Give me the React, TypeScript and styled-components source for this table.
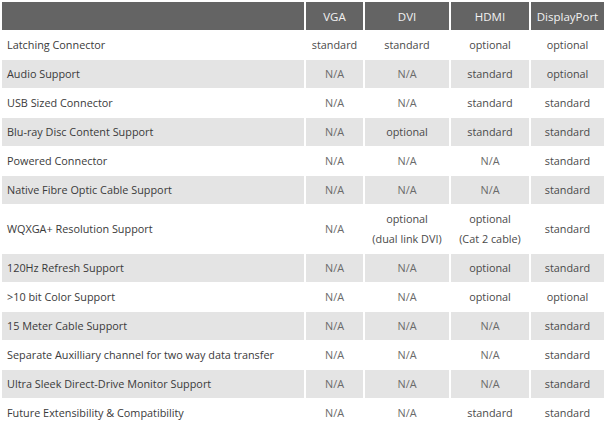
import React from "react";
import styled, { createGlobalStyle } from "styled-components";

const Global = createGlobalStyle`
  html, body { margin: 0; padding: 0; background: #ffffff; }
  body { font-family: "Open Sans", "DejaVu Sans", sans-serif; }
`;

const Table = styled.table`
  border-collapse: separate;
  border-spacing: 2px 1px;
  table-layout: fixed;
  width: 606px;
  margin-top: 1px;
  font-family: "Open Sans", "DejaVu Sans", sans-serif;
  font-size: 10.85px;
`;

const HeadCell = styled.th`
  background: #646464;
  color: #f2f2f2;
  font-weight: normal;
  height: 28px;
  padding: 0;
  text-align: center;
  font-size: 11.5px;
`;

const Row = styled.tr<{ $alt: boolean }>`
  background: ${(p) => (p.$alt ? "#e4e4e4" : "#ffffff")};
`;

const Label = styled.td<{ $tall?: boolean }>`
  height: ${(p) => (p.$tall ? "47px" : "27px")};
  padding: 0 0 1px 5px;
  color: #3a3a3a;
  white-space: nowrap;
`;

const Value = styled.td<{ $na: boolean }>`
  padding: 0 0 1px 0;
  text-align: center;
  color: ${(p) => (p.$na ? "#6a6a6a" : "#4a4a4a")};
  line-height: 20px;
`;

const cols = [
  { name: "", w: 302 },
  { name: "VGA", w: 57 },
  { name: "DVI", w: 84 },
  { name: "HDMI", w: 78 },
  { name: "DisplayPort", w: 73 },
];

const rows: [string, string[]][] = [
  ["Latching Connector", ["standard", "standard", "optional", "optional"]],
  ["Audio Support", ["N/A", "N/A", "standard", "optional"]],
  ["USB Sized Connector", ["N/A", "N/A", "standard", "standard"]],
  ["Blu-ray Disc Content Support", ["N/A", "optional", "standard", "standard"]],
  ["Powered Connector", ["N/A", "N/A", "N/A", "standard"]],
  ["Native Fibre Optic Cable Support", ["N/A", "N/A", "N/A", "standard"]],
  ["WQXGA+ Resolution Support", ["N/A", "optional\n(dual link DVI)", "optional\n(Cat 2 cable)", "standard"]],
  ["120Hz Refresh Support", ["N/A", "N/A", "optional", "standard"]],
  [">10 bit Color Support", ["N/A", "N/A", "optional", "optional"]],
  ["15 Meter Cable Support", ["N/A", "N/A", "N/A", "standard"]],
  ["Separate Auxilliary channel for two way data transfer", ["N/A", "N/A", "N/A", "standard"]],
  ["Ultra Sleek Direct-Drive Monitor Support", ["N/A", "N/A", "N/A", "standard"]],
  ["Future Extensibility & Compatibility", ["N/A", "N/A", "standard", "standard"]],
];

export default function App() {
  return (
    <>
      <Global />
      <Table>
        <colgroup>
          {cols.map((c, i) => (
            <col key={i} style={{ width: c.w }} />
          ))}
        </colgroup>
        <thead>
          <tr>
            {cols.map((c, i) => (
              <HeadCell key={i}>{c.name}</HeadCell>
            ))}
          </tr>
        </thead>
        <tbody>
          {rows.map(([label, vals], i) => (
            <Row key={i} $alt={i % 2 === 1}>
              <Label $tall={vals.some((v) => v.includes("\n"))}>{label}</Label>
              {vals.map((v, j) => (
                <Value key={j} $na={v === "N/A"}>
                  {v.split("\n").map((line, k) => (
                    <div key={k}>{line}</div>
                  ))}
                </Value>
              ))}
            </Row>
          ))}
        </tbody>
      </Table>
    </>
  );
}
